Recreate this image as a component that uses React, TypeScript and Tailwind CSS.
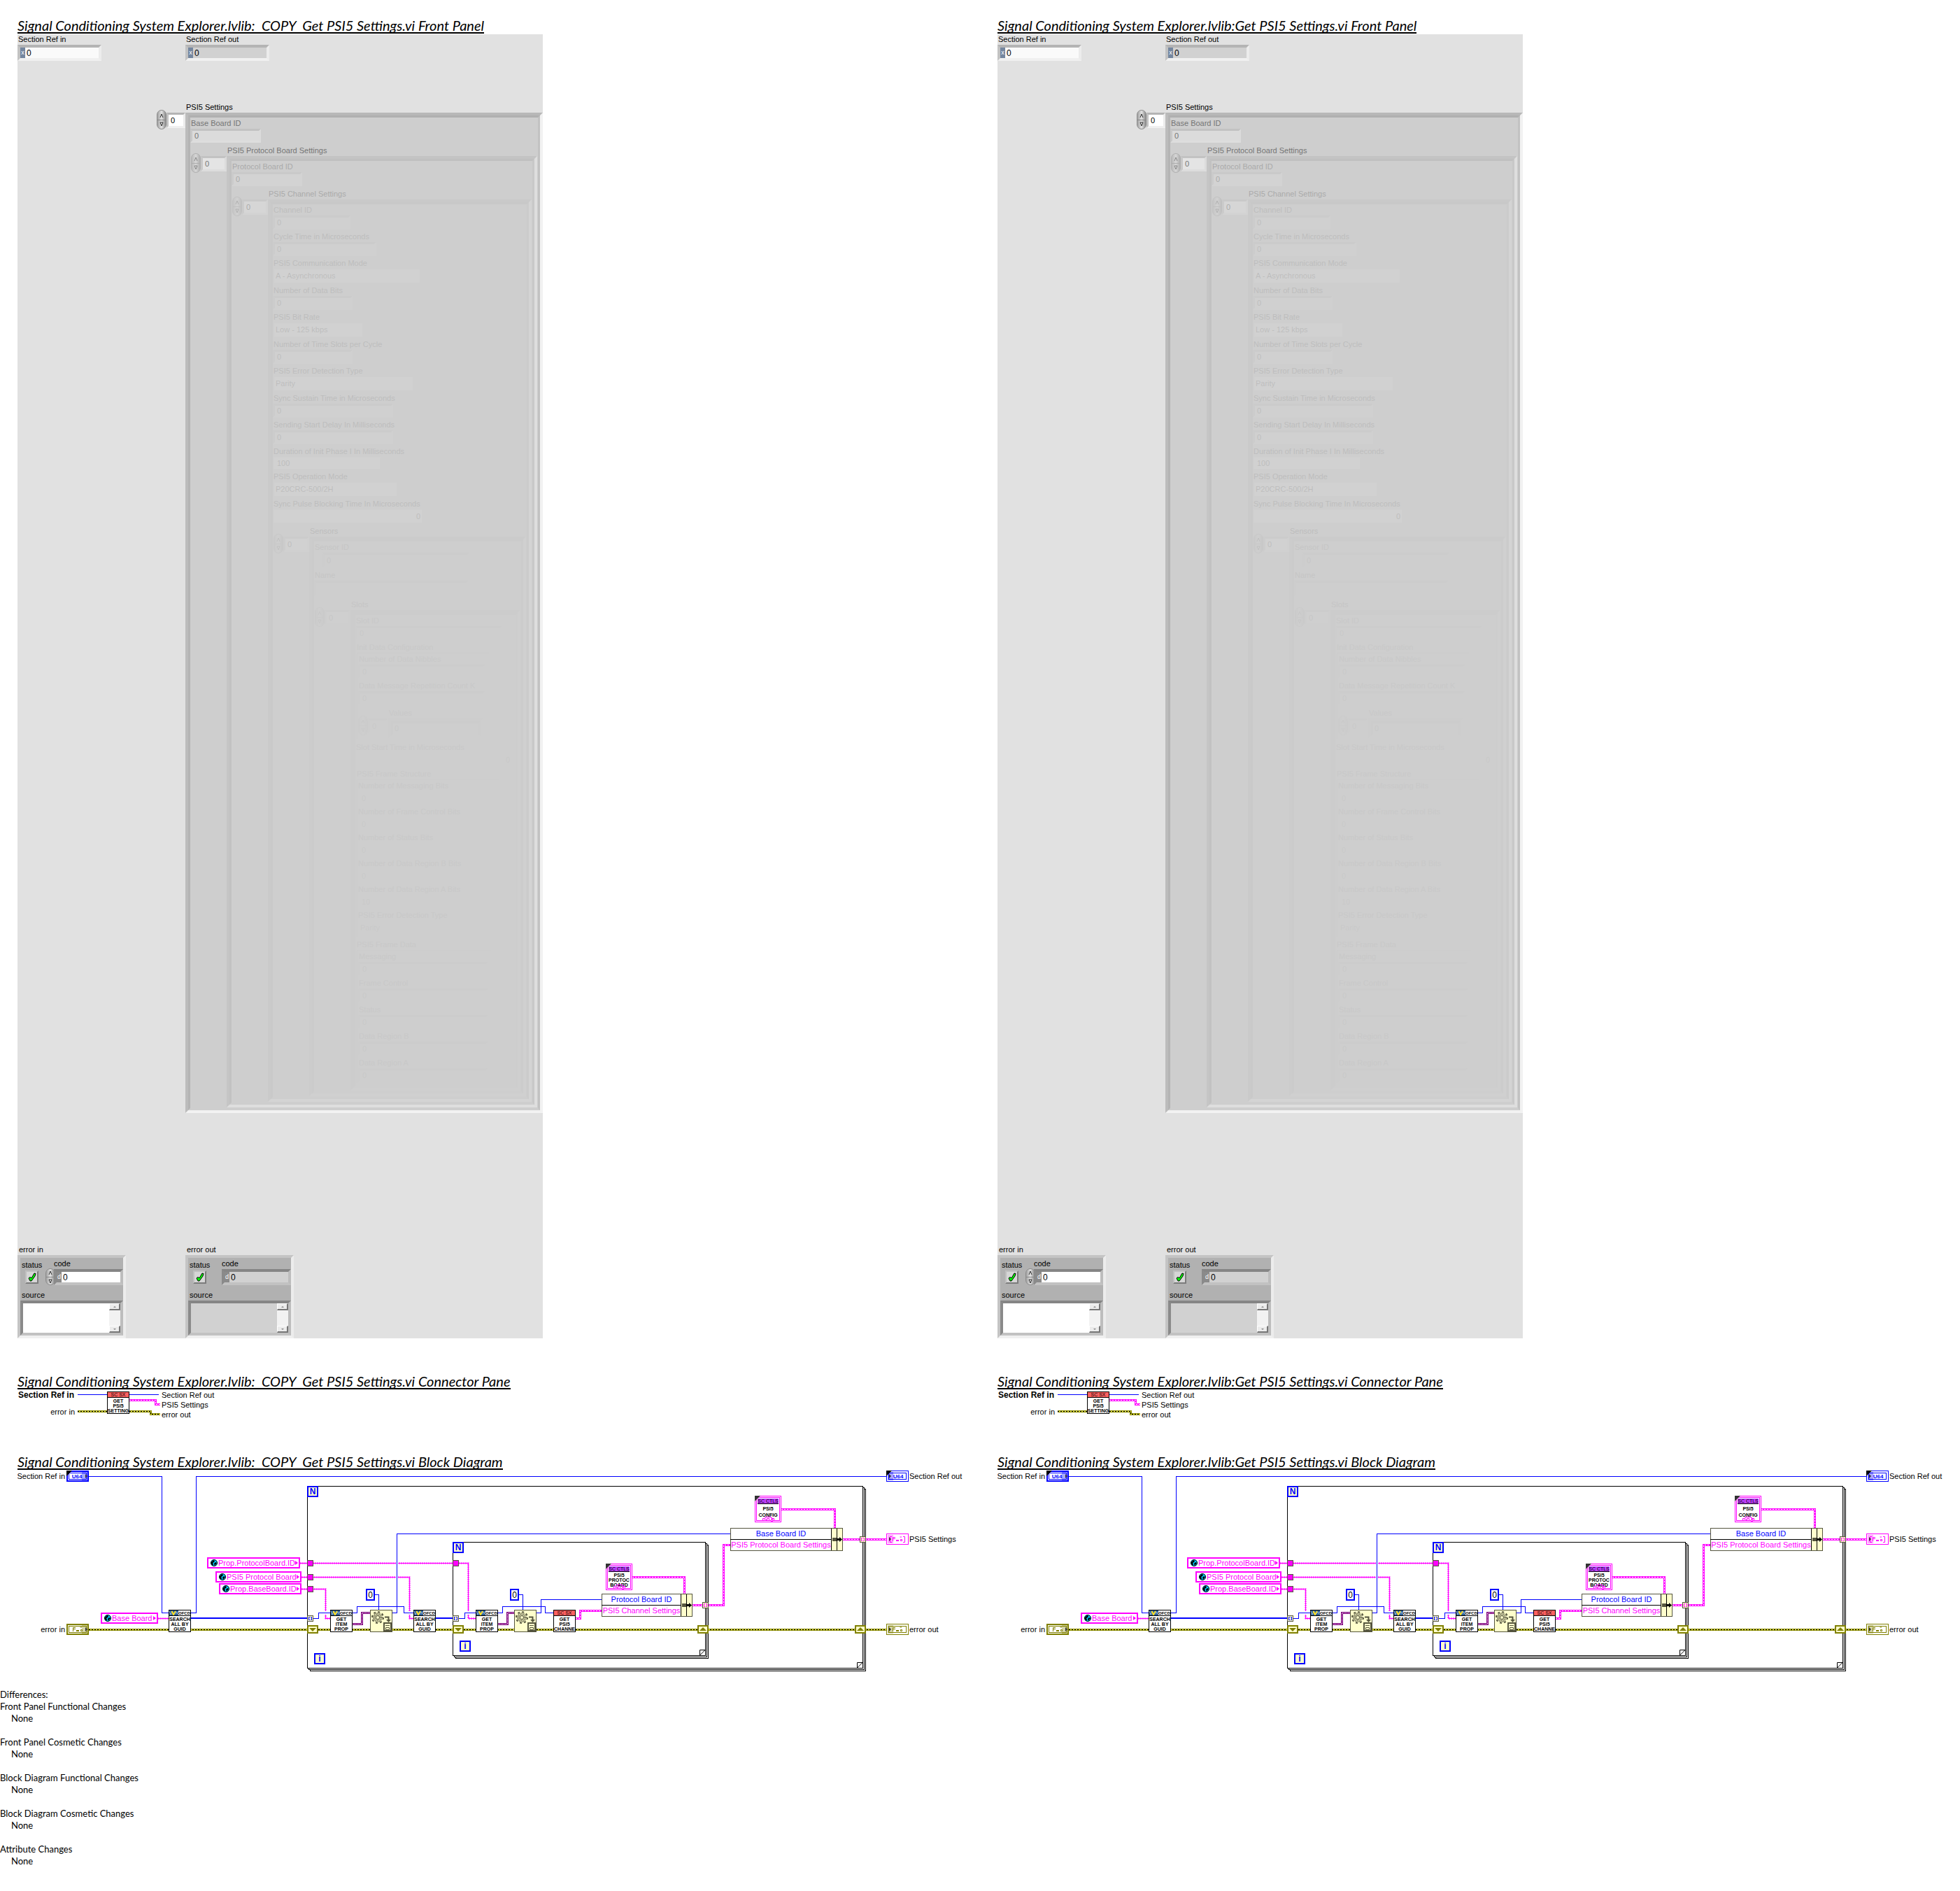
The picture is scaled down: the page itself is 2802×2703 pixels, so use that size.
import React from "react";

/* ---------- front panel controls ---------- */

const BEVEL = "border-t-[#b4b4b4] border-l-[#c2c2c2] border-r-[#ececec] border-b-[#f0f0f0]";

function Spinner({ name, size = "-mt-1 h-7" }: { name: string; size?: string }) {
  return (
    <span className={`flex w-[14px] shrink-0 flex-col overflow-hidden rounded-full border border-[#8c8c8c] bg-linear-to-r from-[#a0a0a0] via-[#e4e4e4] to-[#8a8a8a] ${size}`}>
      <button type="button" aria-label={`${name} up`} className="flex flex-1 items-end justify-center border-b border-[#888888] pb-0.5">
        <svg viewBox="0 0 6 7" className="h-[7px] w-1.5">
          <path d="M1 6 L3 1 L5 6" fill="none" stroke="#333" />
        </svg>
      </button>
      <button type="button" aria-label={`${name} down`} className="flex flex-1 items-start justify-center pt-0.5">
        <svg viewBox="0 0 6 7" className="h-[7px] w-1.5">
          <path d="M1 1 H5 L3 6 Z" fill="none" stroke="#333" />
        </svg>
      </button>
    </span>
  );
}

type FieldProps = { label: string; value?: string; box?: string; className?: string };

function Field({ label, value = "0", box = "h-5 w-[111px]", className = "" }: FieldProps) {
  return (
    <label className={`mb-0.5 flex flex-col items-start ${className}`}>
      <span className="h-4 pl-px leading-4 whitespace-nowrap">{label}</span>
      <input readOnly value={value} className={`border-3 bg-[#ececec] pl-[3px] leading-none ${BEVEL} ${box}`} />
    </label>
  );
}

function EnumField({ label, value = "", box = "w-[210px]" }: FieldProps) {
  return (
    <label className="mb-0.5 flex flex-col items-start">
      <span className="h-4 pl-px leading-4 whitespace-nowrap">{label}</span>
      <select defaultValue={value} className={`ml-px h-[21px] appearance-none border border-[#dddddd] bg-white pl-0.5 ${box}`}>
        <option>{value}</option>
      </select>
    </label>
  );
}

function FlatField({ label, value = "0", box = "" }: FieldProps) {
  return (
    <label className="mb-0.5 flex flex-col items-start">
      <span className="h-4 pl-px leading-4 whitespace-nowrap">{label}</span>
      <input readOnly value={value} className={`ml-px border border-[#e0e0e0] bg-[#f8f8f8] ${box}`} />
    </label>
  );
}

type ArrayProps = {
  label: string;
  gutter?: string;
  indexBox?: string;
  dim: string;
  frame?: string;
  children: React.ReactNode;
};

function ArrayControl({ label, gutter = "w-[52px] pl-px", indexBox = "w-[37px]", dim, frame = "flex-1", children }: ArrayProps) {
  return (
    <section className="flex pb-px pr-px">
      <div className={`flex shrink-0 items-start pt-[17px] ${gutter}`}>
        <Spinner name={`${label} index`} />
        <input readOnly aria-label={`${label} index`} value="0" className={`h-[22px] border-3 bg-white pl-[3px] ${BEVEL} ${indexBox}`} />
      </div>
      <div className={`flex min-w-0 flex-col ${frame}`}>
        <h3 className="h-[17px] pl-px leading-[18px] whitespace-nowrap">{label}</h3>
        <div className="flex-1 border-4 border-t-[#b8b8b8] border-r-[#f2f2f2] border-b-[#f2f2f2] border-l-[#bcbcbc]">
          <div className="h-full border-3 border-t-[#b0b0b0] border-r-[#c2c2c2] border-b-[#cecece] border-l-[#b4b4b4] bg-[#cecece]">
            <div className={dim}>{children}</div>
          </div>
        </div>
      </div>
    </section>
  );
}

function Cluster({ label, box, children }: { label: string; box: string; children: React.ReactNode }) {
  return (
    <fieldset className="mb-0.5">
      <legend className="h-4 pl-0.5 leading-4">{label}</legend>
      <div className={`ml-0.5 border border-t-[#a8a8a8] border-r-[#f0f0f0] border-b-[#f0f0f0] border-l-[#b4b4b4] ${box}`}>{children}</div>
    </fieldset>
  );
}

function PanelRef({ label, mode }: { label: string; mode: string }) {
  return (
    <label className="flex w-[240px] flex-col items-start">
      <span className="h-[15px] pl-px leading-[15px]">{label}</span>
      <span className={`flex h-[23px] w-[120px] border-4 ${BEVEL} ${mode}`}>
        <span className="w-[7px] bg-[#74869f] text-center text-[9px] leading-[15px] text-white">x</span>
        <input readOnly value="0" className="min-w-0 flex-1 pl-0.5 text-[12px] text-black" />
      </span>
    </label>
  );
}

const ERR_BEVEL = "border-t-[#858585] border-l-[#8a8a8a] border-r-[#bdbdbd] border-b-[#c2c2c2]";

function ScrollArrow({ up }: { up: boolean }) {
  return (
    <button type="button" aria-label={up ? "scroll up" : "scroll down"} className="flex h-[10px] w-4 items-center justify-center border border-t-white border-r-2 border-r-[#777777] border-b-2 border-b-[#777777] border-l-white bg-[#ececec]">
      <svg viewBox="0 0 4 2" className="h-0.5 w-1">
        <path d={up ? "M0 2 L2 0 L4 2 Z" : "M0 0 H4 L2 2 Z"} fill="#888" />
      </svg>
    </button>
  );
}

function ErrorCluster({ label, input }: { label: string; input: boolean }) {
  const fill = input ? "bg-white" : "bg-[#d1d1d1]";
  return (
    <section className="w-[240px]">
      <h3 className="h-[15px] pl-0.5 leading-[15px]">{label}</h3>
      <div className="flex h-[119px] w-[155px] flex-col border-4 border-t-[#c4c4c4] border-r-[#ececec] border-b-[#f0f0f0] border-l-[#c4c4c4] bg-[#b1b1b1]">
        <div className="flex h-[39px]">
          <div className="flex w-9 flex-col items-start pt-0.5 pl-0.5">
            <span className="h-4 leading-4">status</span>
            <span className="ml-[5px] flex h-[19px] w-[19px] items-center justify-center border-2 border-t-[#bfbfbf] border-r-[#7c7c7c] border-b-[#7c7c7c] border-l-[#bfbfbf] bg-[#d6d6d6]">
              <svg viewBox="0 0 12 13" className="h-[13px] w-3">
                <path d="M1 8 L3 6.500 L5 8 L9 1 L11 1.500 L10 5 L5 12 L3 12 Z" fill="#00ff00" stroke="#000" />
              </svg>
            </span>
          </div>
          <div className="flex flex-1 items-start">
            <span className="w-3 pt-[15px]">{input ? <Spinner name="code" size="h-6" /> : null}</span>
            <label className="flex flex-1 flex-col">
              <span className="h-4 leading-4">code</span>
              <span className={`flex h-[23px] w-[99px] border-4 ${ERR_BEVEL} ${fill}`}>
                <span className="w-[7px] bg-[#8b8b8b] text-center text-[9px] leading-[15px] text-white">d</span>
                <input readOnly value="0" className="min-w-0 flex-1 pl-0.5 text-[12px]" />
              </span>
            </label>
          </div>
        </div>
        <label className="mt-1.5 flex flex-1 flex-col">
          <span className="h-4 pl-0.5 leading-4">source</span>
          <span className={`flex h-[50px] w-[147px] border-4 ${ERR_BEVEL} ${fill}`}>
            <textarea readOnly value="" className="min-w-0 flex-1 resize-none overflow-hidden" />
            <span className="flex flex-col justify-between bg-[#f2f2f2]">
              <ScrollArrow up />
              <ScrollArrow up={false} />
            </span>
          </span>
        </label>
      </div>
    </section>
  );
}

function FrontPanel() {
  return (
    <div className="mt-px w-full max-w-[751px] bg-[#e1e1e1]">
      <div className="flex">
        <PanelRef label="Section Ref in" mode="bg-[#fafafa]" />
        <PanelRef label="Section Ref out" mode="bg-[#d1d1d1]" />
      </div>
      <div className="-mr-px mt-[57px] -mb-px ml-[199px]">
        <ArrayControl label="PSI5 Settings" gutter="w-[41px]" indexBox="w-[27px]" dim="opacity-45">
          <Field label="Base Board ID" box="h-5 w-[101px]" />
          <ArrayControl label="PSI5 Protocol Board Settings" dim="opacity-40">
            <Field label="Protocol Board ID" box="h-5 w-[101px]" />
            <ArrayControl label="PSI5 Channel Settings" dim="opacity-45">
              <Field label="Channel ID" />
              <Field label="Cycle Time in Microseconds" box="h-5 w-[148px]" />
              <EnumField label="PSI5 Communication Mode" value="A - Asynchronous" />
              <Field label="Number of Data Bits" box="h-5 w-[114px]" />
              <EnumField label="PSI5 Bit Rate" value="Low - 125 kbps" box="w-[128px]" />
              <Field label="Number of Time Slots per Cycle" box="h-5 w-[114px]" />
              <EnumField label="PSI5 Error Detection Type" value="Parity" box="w-[200px]" />
              <Field label="Sync Sustain Time in Microseconds" box="h-5 w-[172px]" />
              <Field label="Sending Start Delay In Milliseconds" box="h-5 w-[172px]" />
              <FlatField label="Duration of Init Phase I In Milliseconds" value="100" box="h-[18px] w-[153px] pl-1" />
              <EnumField label="PSI5 Operation Mode" value="P20CRC-500/2H" box="w-[177px]" />
              <FlatField label="Sync Pulse Blocking Time In Microseconds" box="h-5 w-[213px] pr-0.5 text-right" />
              <ArrayControl label="Sensors" dim="opacity-50">
                <Field label="Sensor ID" box="ml-3 h-[22px] w-[210px]" />
                <Field label="Name" value="" box="h-[23px] w-[221px]" />
                <ArrayControl label="Slots" dim="opacity-60">
                  <Field label="Slot ID" box="h-5 w-[210px]" />
                  <Cluster label="Init Data Configuration" box="w-[190px] pl-px">
                    <Field label="Number of Data Nibbles" box="h-5 w-[182px]" />
                    <Field label="Data Message Repetition Count K" box="h-5 w-[182px]" />
                    <ArrayControl label="Values" gutter="w-[43px]" indexBox="w-[29px]" dim="opacity-100" frame="w-[136px]">
                      <input readOnly aria-label="Values element" value="0" className="block h-[15px] w-full pl-0.5" />
                    </ArrayControl>
                  </Cluster>
                  <FlatField label="Slot Start Time in Microseconds" box="h-5 w-[225px] pr-1 text-right" />
                  <Cluster label="PSI5 Frame Structure" box="w-[203px]">
                    <FlatField label="Number of Messaging Bits" box="h-[19px] w-[200px] pl-1" />
                    <FlatField label="Number of Frame Control Bits" box="h-[19px] w-[200px] pl-1" />
                    <FlatField label="Number of Status Bits" box="h-[19px] w-[200px] pl-1" />
                    <FlatField label="Number of Data Region B Bits" box="h-[19px] w-[200px] pl-1" />
                    <FlatField label="Number of Data Region A Bits" value="10" box="h-[19px] w-[200px] pl-1" />
                    <EnumField label="PSI5 Error Detection Type" value="Parity" box="w-[200px]" />
                  </Cluster>
                  <Cluster label="PSI5 Frame Data" box="w-[192px] pl-px">
                    <Field label="Messaging" box="h-5 w-[186px]" />
                    <Field label="Frame Control" box="h-5 w-[186px]" />
                    <Field label="Status" box="h-5 w-[186px]" />
                    <Field label="Data Region B" box="h-5 w-[186px]" />
                    <Field label="Data Region A" box="h-5 w-[186px]" />
                  </Cluster>
                </ArrayControl>
              </ArrayControl>
            </ArrayControl>
          </ArrayControl>
        </ArrayControl>
      </div>
      <div className="mt-[188px] flex">
        <ErrorCluster label="error in" input />
        <ErrorCluster label="error out" input={false} />
      </div>
    </div>
  );
}

/* ---------- wires ---------- */

const Blue = ({ d, w = 1 }: { d: string; w?: number }) => (
  <path d={d} fill="none" stroke="#0000ff" strokeWidth={w} shapeRendering="crispEdges" />
);

const StringWire = ({ d }: { d: string }) => (
  <g fill="none" stroke="#ff00ff">
    <path d={d} />
    <path d={d} strokeWidth="2" strokeDasharray="2 1" />
  </g>
);

const ClusterWire = ({ d }: { d: string }) => (
  <g fill="none">
    <path d={d} stroke="#ff00ff" strokeWidth="3" />
    <path d={d} stroke="#ffffff" strokeDasharray="2 2" />
  </g>
);

const VariantWire = ({ d }: { d: string }) => (
  <g fill="none">
    <path d={d} stroke="#800080" strokeWidth="3" />
    <path d={d} stroke="#ffffff" strokeDasharray="1 1" />
  </g>
);

const ErrorWire = ({ d }: { d: string }) => (
  <g fill="none">
    <path d={d} stroke="#8c8c00" strokeWidth="3" />
    <path d={d} stroke="#ffff40" />
    <path d={d} stroke="#000000" strokeDasharray="2 2" />
  </g>
);

/* ---------- nodes ---------- */

type NodeProps = { x: number; y: number };

function ViIcon({ x, y, kind, lines }: NodeProps & { kind: "OFCD" | "SC SX"; lines: string[] }) {
  return (
    <g transform={`translate(${x} ${y})`} className="text-[7px] font-bold">
      <rect x="0.5" y="0.5" width="31" height="31" fill="#fff" stroke="#000" />
      {kind === "OFCD" ? (
        <g>
          <rect x="1" y="1" width="13" height="7" fill="#2f6098" />
          <path d="M1 2 L3 7 L5 2 L7 6" fill="none" stroke="#8fb4d6" />
          <path d="M4.500 2 L7 7 L10 2" fill="none" stroke="#ffe020" strokeWidth="2" />
          <path d="M9 6 L11 3 L12.500 6 L13.500 3" fill="none" stroke="#8fb4d6" />
          <text x="14" y="7" className="text-[6px]">OFCD</text>
        </g>
      ) : (
        <g>
          <rect x="1" y="1" width="30" height="7" fill="#ff6060" />
          <text x="16" y="7" textAnchor="middle" className="font-normal">SC SX</text>
        </g>
      )}
      <path d="M0 8.500 H32" stroke="#000" />
      {lines.map((line, i) => (
        <text key={line} x="16" y={16 + i * 7} textAnchor="middle">{line}</text>
      ))}
    </g>
  );
}

function Globe({ x, y }: NodeProps) {
  return (
    <g>
      <circle cx={x} cy={y} r="5" fill="#00c8ff" />
      <circle cx={x} cy={y} r="4.500" fill="none" stroke="#000" />
      <path d={`M${x - 4} ${y - 1} l3 -3 l2 1 l-1 2 l-2 1 l1 2 l-1 2 l-2 -3 z M${x + 1} ${y + 4} l-1 -3 l2 -2 l2 1 z`} fill="#000" />
    </g>
  );
}

function GlobalVar({ x, y, w, label }: NodeProps & { w: number; label: string }) {
  return (
    <g>
      <rect x={x + 1} y={y + 1} width={w - 2} height="14" fill="#fff" stroke="#ff00ff" strokeWidth="2" />
      <Globe x={x + 10} y={y + 8} />
      <text x={x + 16} y={y + 12} fill="#ff00ff">{label}</text>
      <path d={`M${x + w - 7} ${y + 5} l4 3 l-4 3 z`} fill="#ff00ff" />
    </g>
  );
}

function Terminal({ x, y, color, out, kind }: NodeProps & { color: string; out?: boolean; kind: "num" | "cluster" | "array" }) {
  return (
    <g transform={`translate(${x} ${y})`}>
      <rect x={out ? 0.5 : 1} y={out ? 0.5 : 1} width={out ? 31 : 30} height={out ? 15 : 14} fill="#fff" stroke={color} strokeWidth={out ? 1 : 2} />
      {kind !== "array" && <rect x="3.500" y="3.500" width="25" height="9" fill="#fff" stroke={color} />}
      {kind === "num" ? (
        <text x={out ? 17 : 15} y="11" textAnchor="middle" fill={color} className="text-[8px] font-bold">U64</text>
      ) : (
        <g fill="none" stroke={color}>
          <path d="M9.500 11 V5.500 H13 M9 7.500 H13 M14 10.500 H18 M14 9.500 H18 M19.500 5 H22 M20.500 8.500 h2 v2 h-2 z" />
          {kind === "array" && <path d="M8 4.500 H5.500 V12.500 H8 M24 4.500 H26.500 V12.500 H24" />}
        </g>
      )}
      <rect x={out ? 2 : 22} y="2" width="8" height="12" fill={color} opacity="0.35" />
      <path d={out ? "M4 5 L7 8 L4 11 Z" : "M27 5 L30 8 L27 11 Z"} fill="#333" />
      {kind === "num" && <path d="M0 0 H8 L0 8 Z" fill="#000" />}
    </g>
  );
}

function GearNode({ x, y }: NodeProps) {
  return (
    <g transform={`translate(${x} ${y})`}>
      <rect x="0.500" y="0.500" width="31" height="31" fill="#ffffcc" stroke="#55553f" />
      <g fill="none" stroke="#55553f">
        <circle cx="11" cy="11" r="8" strokeWidth="2" strokeDasharray="3 3.280" />
        <circle cx="11" cy="11" r="6" strokeWidth="2" strokeDasharray="1 1" />
        <circle cx="11" cy="11" r="4" strokeWidth="2" strokeDasharray="1 1" />
        <circle cx="11" cy="11" r="2.500" />
        <path d="M21 10.500 H26.500 V15" strokeWidth="2" />
        <rect x="20" y="19" width="10" height="11" strokeWidth="2" fill="#ffffcc" />
        <path d="M22 22.500 H28 M22.500 25.500 h5 v3 h-5 z" />
      </g>
      <path d="M23 14 H30 L26.500 18 Z" fill="#55553f" />
    </g>
  );
}

function TypeDef({ x, y, lines, first, step }: NodeProps & { lines: string[]; first: number; step: number }) {
  return (
    <g transform={`translate(${x} ${y})`} className="text-[7px] font-bold">
      <rect x="0.500" y="0.500" width="37" height="37" fill="#fff" stroke="#ff00ff" />
      <rect x="2.500" y="2.500" width="33" height="33" fill="#fff" stroke="#ff00ff" />
      <rect x="4" y="4" width="30" height="7" fill="#bf3fff" />
      <path d="M4 11.500 H34" stroke="#000" />
      <text x="19" y="10" textAnchor="middle" className="font-normal">SC CTLS</text>
      {lines.map((line, i) => (
        <text key={line} x="19" y={first + i * step} textAnchor="middle">{line}</text>
      ))}
      <path d="M11.500 35.500 V32.500 H15 V30.500 H24 V32.500 H27.500 V35.500" fill="none" stroke="#ff00ff" />
      <path d="M13.500 36 V34.500 H17 M17.500 32.500 h3 v3 h-3 z M23.500 33.500 h2 v3 h-2 z" fill="#fff" stroke="#ff00ff" />
      <path d="M0 0 H8 L0 8 Z" fill="#333" />
    </g>
  );
}

function Bundle({ x, y, w, top, bottom }: NodeProps & { w: number; top: string; bottom: string }) {
  const mid = (w - 16) / 2;
  return (
    <g transform={`translate(${x} ${y})`}>
      <rect x="0.500" y="0.500" width={w - 1} height="32" fill="#fff" stroke="#55553f" />
      <rect x={w - 16} y="1" width="15" height="31" fill="#ffffcc" />
      <path d={`M0 16.500 H${w - 16} M${w - 16.5} 1 V32 M${w - 8.5} 1 V32`} stroke="#000" />
      <text x={mid} y="12" textAnchor="middle" fill="#0000ff">{top}</text>
      <text x={mid} y="28" textAnchor="middle" fill="#ff00ff">{bottom}</text>
      <rect x={w - 15} y="14" width="6" height="5" fill="#55553f" />
      <path d={`M${w - 9} 16.500 h5`} stroke="#000" strokeWidth="3" />
      <path d={`M${w - 5} 13 l4 3.500 l-4 3.500 z`} fill="#000" />
    </g>
  );
}

function ForLoop({ x, y, w, h, i }: NodeProps & { w: number; h: number; i: [number, number] }) {
  return (
    <g>
      <g transform={`translate(${x} ${y})`} fill="none" stroke="#000">
        <rect x="4.500" y="4.500" width={w} height={h} fill="#fff" />
        <rect x="2.500" y="2.500" width={w} height={h} fill="#fff" />
        <rect x="0.500" y="0.500" width={w} height={h} fill="#fff" />
        <path d={`M${w - 7.5} ${h} v-7.500 h7.500 l-7.500 7.500`} />
      </g>
      <g fill="#ffffcc" stroke="#0000ff" strokeWidth="2">
        <rect x={x + 1} y={y + 1} width="14" height="14" />
        <rect x={i[0] + 1} y={i[1] + 1} width="14" height="14" />
      </g>
      <g fill="#0000ff" textAnchor="middle" className="text-[12px] font-bold">
        <text x={x + 8} y={y + 12}>N</text>
        <text x={i[0] + 8} y={i[1] + 12}>i</text>
      </g>
    </g>
  );
}

const Tunnel = ({ x, y }: NodeProps) => (
  <rect x={x + 0.5} y={y + 0.5} width="8" height="8" fill="#ff00ff" stroke="#55553f" />
);

const IndexTunnel = ({ x, y, color }: NodeProps & { color: string }) => (
  <g transform={`translate(${x} ${y})`} fill="none">
    <rect x="0.500" y="0.500" width="8" height="8" fill="#ffffcc" stroke="#55553f" />
    <path d="M4 2.500 H2.500 V6.500 H4 M5 2.500 H6.500 V6.500 H5" stroke={color} />
  </g>
);

const ShiftRegister = ({ x, y, up }: NodeProps & { up?: boolean }) => (
  <g transform={`translate(${x} ${y})`}>
    <rect x="1" y="1" width="14" height="10" fill="#ffffcc" stroke="#808000" strokeWidth="2" />
    <path d={up ? "M3 8 L8 3 L13 8 Z" : "M3 4 H13 L8 9 Z"} fill="#808000" />
  </g>
);

const ZeroConst = ({ x, y }: NodeProps) => (
  <g>
    <rect x={x + 1} y={y + 1} width="11" height="15" fill="#fff" stroke="#0000ff" strokeWidth="2" />
    <text x={x + 6.5} y={y + 13} textAnchor="middle" className="text-[12px]">0</text>
  </g>
);

/* ---------- drawings ---------- */

const LABEL = "text-[11px] font-['Liberation_Sans',Arial,sans-serif]";

function ConnectorPane() {
  return (
    <svg viewBox="0 0 700 94" className={`block h-[94px] w-[700px] ${LABEL}`}>
      <Blue d="M86 7.500 H128 M160 7.500 H202" />
      <ClusterWire d="M160 15.500 H197.500 V21.500 H204" />
      <ErrorWire d="M86 31.500 H128" />
      <ErrorWire d="M160 31.500 H190.500 V35.500 H204" />
      <ViIcon x={128} y={3} kind="SC SX" lines={["GET", "PSI5", "SETTING"]} />
      <text x="1" y="12" className="text-[12px] font-bold">Section Ref in</text>
      <text x="82" y="36" textAnchor="end">error in</text>
      <text x="206" y="12">Section Ref out</text>
      <text x="206" y="26">PSI5 Settings</text>
      <text x="206" y="40">error out</text>
    </svg>
  );
}

function BlockDiagram() {
  return (
    <svg viewBox="25 2101 1376 290" className={`block h-[290px] w-[1376px] ${LABEL}`}>
      <ForLoop x={439} y={2124} w={794} h={260} i={[449, 2363]} />
      <ForLoop x={647} y={2204} w={361} h={162} i={[657, 2345]} />

      <ErrorWire d="M127 2329.500 H1267" />
      <Blue w={2} d="M273 2313 H439 M623 2313 H647" />
      <StringWire d="M226 2313.500 H241" />
      <StringWire d="M429 2234.500 H647" />
      <StringWire d="M431 2254.500 H585.500 V2313.500 H591" />
      <StringWire d="M431 2271.500 H465.500 V2313.500 H472" />
      <StringWire d="M656 2234.500 H669.500 V2313.500 H680" />
      <path d="M567.500 2230 V2260 M465.500 2303 V2308 M669.500 2303 V2308 M585.500 2303 V2308" stroke="#fff" strokeWidth="3" />
      <Blue d="M127 2110.500 H231.500 V2305.500 H241 M273 2305.500 H280.500 V2110.500 H1267" />
      <Blue d="M448 2313.500 H455.500 V2305.500 H472 M504 2305.500 H510.500 V2296.500 H577.500 V2305.500 H591" />
      <Blue d="M536 2279.500 H541.500 V2301 M561 2305.500 H567.500 V2192.500 H1044" />
      <Blue d="M656 2313.500 H664.500 V2305.500 H680 M712 2305.500 H718.500 V2296.500 H779.500 V2305.500 H791" />
      <Blue d="M742 2279.500 H747.500 V2301 M767 2305.500 H773.500 V2286.500 H860" />
      <VariantWire d="M504 2321.500 H517.500 V2305.500 H529" />
      <VariantWire d="M712 2321.500 H725.500 V2305.500 H735" />
      <ClusterWire d="M823 2313.500 H829.500 V2302.500 H860" />
      <ClusterWire d="M904 2254.500 H978.500 V2278" />
      <ClusterWire d="M990 2294.500 H1034.500 V2208.500 H1044" />
      <ClusterWire d="M1117 2157.500 H1193.500 V2184" />
      <ClusterWire d="M1205 2200.500 H1267" />

      <Terminal x={95} y={2102} color="#0000ff" kind="num" />
      <Terminal x={95} y={2321} color="#808000" kind="cluster" />
      <Terminal x={1267} y={2102} color="#0000ff" kind="num" out />
      <Terminal x={1267} y={2192} color="#ff00ff" kind="array" out />
      <Terminal x={1267} y={2321} color="#808000" kind="cluster" out />

      <GlobalVar x={144} y={2305} w={82} label="Base Board" />
      <GlobalVar x={296} y={2226} w={133} label="Prop.ProtocolBoard.ID" />
      <GlobalVar x={308} y={2246} w={123} label="PSI5 Protocol Board" />
      <GlobalVar x={313} y={2263} w={118} label="Prop.BaseBoard.ID" />

      <Tunnel x={439} y={2230} />
      <Tunnel x={439} y={2250} />
      <Tunnel x={439} y={2267} />
      <Tunnel x={647} y={2230} />
      <IndexTunnel x={439} y={2309} color="#0000ff" />
      <IndexTunnel x={647} y={2309} color="#0000ff" />
      <IndexTunnel x={1004} y={2290} color="#ff00ff" />
      <IndexTunnel x={1229} y={2196} color="#ff00ff" />
      <ShiftRegister x={439} y={2323} />
      <ShiftRegister x={647} y={2323} />
      <ShiftRegister x={997} y={2323} up />
      <ShiftRegister x={1222} y={2323} up />

      <ViIcon x={241} y={2301} kind="OFCD" lines={["SEARCH", "ALL BY", "GUID"]} />
      <ViIcon x={472} y={2301} kind="OFCD" lines={["GET", "ITEM", "PROP"]} />
      <ViIcon x={591} y={2301} kind="OFCD" lines={["SEARCH", "ALL BY", "GUID"]} />
      <ViIcon x={680} y={2301} kind="OFCD" lines={["GET", "ITEM", "PROP"]} />
      <ViIcon x={791} y={2301} kind="SC SX" lines={["GET", "PSI5", "CHANNE"]} />
      <ZeroConst x={523} y={2271} />
      <ZeroConst x={729} y={2271} />
      <GearNode x={529} y={2301} />
      <GearNode x={735} y={2301} />
      <TypeDef x={866} y={2235} lines={["PSI5", "PROTOC", "BOARD"]} first={19} step={7} />
      <TypeDef x={1079} y={2138} lines={["PSI5", "CONFIG"]} first={21} step={9} />
      <Bundle x={860} y={2278} w={130} top="Protocol Board ID" bottom="PSI5 Channel Settings" />
      <Bundle x={1044} y={2184} w={161} top="Base Board ID" bottom="PSI5 Protocol Board Settings" />

      <text x="93" y="2114" textAnchor="end">Section Ref in</text>
      <text x="93" y="2333" textAnchor="end">error in</text>
      <text x="1300" y="2114">Section Ref out</text>
      <text x="1300" y="2204">PSI5 Settings</text>
      <text x="1300" y="2333">error out</text>
    </svg>
  );
}

/* ---------- report ---------- */

function Title({ children, className = "" }: { children: string; className?: string }) {
  return (
    <h2 className={`h-[21px] w-fit border-b-2 border-black font-[Lato,'Open_Sans',sans-serif] text-[20px] leading-[19px] whitespace-pre italic ${className}`}>
      {children}
    </h2>
  );
}

function ViReport({ name }: { name: string }) {
  return (
    <article className={`min-w-0 pl-[25px] ${LABEL}`}>
      <Title>{`${name} Front Panel`}</Title>
      <FrontPanel />
      <Title className="mt-[52px]">{`${name} Connector Pane`}</Title>
      <ConnectorPane />
      <Title>{`${name} Block Diagram`}</Title>
      <BlockDiagram />
    </article>
  );
}

const DIFFERENCES = [
  "Front Panel Functional Changes",
  "Front Panel Cosmetic Changes",
  "Block Diagram Functional Changes",
  "Block Diagram Cosmetic Changes",
  "Attribute Changes",
];

export default function App() {
  return (
    <main className="min-h-screen bg-white pt-[27px] text-black">
      <div className="grid grid-cols-2">
        <ViReport name="Signal Conditioning System Explorer.lvlib:  COPY  Get PSI5 Settings.vi" />
        <ViReport name="Signal Conditioning System Explorer.lvlib:Get PSI5 Settings.vi" />
      </div>
      <section className="mt-[23px] font-[Lato,'Open_Sans',sans-serif] text-[13px] leading-[17px]">
        <h2>Differences:</h2>
        <dl className="flex flex-col gap-[17px]">
          {DIFFERENCES.map((d) => (
            <div key={d}>
              <dt>{d}</dt>
              <dd className="pl-4">None</dd>
            </div>
          ))}
        </dl>
      </section>
    </main>
  );
}
